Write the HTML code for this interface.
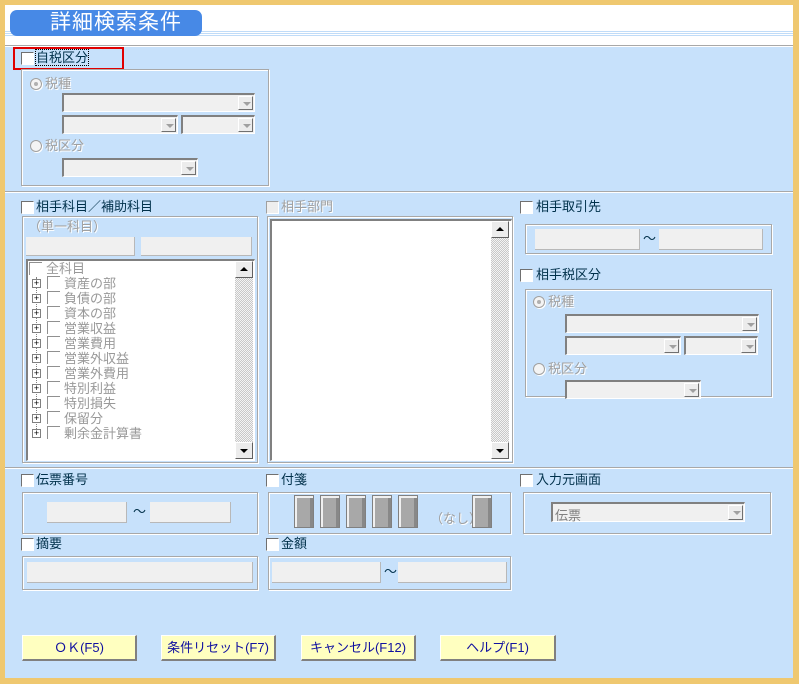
<!DOCTYPE html>
<html><head><meta charset="utf-8"><style>
*{margin:0;padding:0;box-sizing:border-box}
body{width:799px;height:684px;background:#efc870;position:relative;overflow:hidden;font-family:"Liberation Sans","Noto Sans CJK JP",sans-serif;font-size:13px;color:#00304a}
.a{position:absolute}
.main{left:5px;top:5px;width:788px;height:673px;background:#c7e1fb}
.hdr{left:5px;top:5px;width:788px;height:40px;background:#fff}
.hl{left:5px;height:1px;width:788px;background:#c0dcf8}
.sep{left:5px;width:788px;height:2px;border-top:1px solid #a8a8a8;border-bottom:1px solid #fff}
.title{left:10px;top:10px;width:192px;height:26px;background:#4789e6;border-radius:7px;color:#fff;font-size:21px;line-height:26px;padding-left:40px;letter-spacing:1px}
.cb{width:13px;height:13px;background:#fff;border-top:1px solid #707070;border-left:1px solid #707070;border-right:1px solid #fff;border-bottom:1px solid #fff}
.lb{font-size:13px;line-height:15px;color:#00304a;white-space:nowrap}
.dis{color:#a0a0a0;text-shadow:1px 1px 0 #fff}
.grp{border:1px solid #a8a8a8;box-shadow:1px 1px 0 #fff, inset 1px 1px 0 #fff}
.fld{background:#f0f0f0;border-right:1px solid #b8b8b8;border-bottom:1px solid #b8b8b8}
.cmb{background:#f0f0f0;border-top:2px solid #808080;border-left:2px solid #808080;border-right:1px solid #fff;border-bottom:1px solid #fff}
.cmb i{position:absolute;right:1px;top:1px;bottom:1px;width:15px;background:#ececec;border-right:1px solid #707070;border-bottom:1px solid #707070;border-top:1px solid #fff;border-left:1px solid #fff}
.cmb i:after{content:"";position:absolute;left:4px;top:5px;border-left:4px solid transparent;border-right:4px solid transparent;border-top:4px solid #a0a0a0}
.rad{width:12px;height:12px;border-radius:50%;background:#f4f4f4;border:1px solid #a0a0a0;box-shadow:1px 1px 0 #fff}
.rad.on:after{content:"";position:absolute;left:3px;top:3px;width:4px;height:4px;border-radius:50%;background:#b0b0b0}
.lst{background:#fff;border-top:2px solid #808080;border-left:2px solid #808080;border-right:1px solid #fff;border-bottom:1px solid #fff}
.sb{background:repeating-conic-gradient(#c8c8c8 0 25%,#f4f4f4 0 50%) 0 0/2px 2px}
.sbb{width:18px;height:17px;background:#ececec;border-right:1px solid #606060;border-bottom:1px solid #606060;border-top:1px solid #fff;border-left:1px solid #fff}
.up:after,.dn:after{content:"";position:absolute;left:4px;border-left:4px solid transparent;border-right:4px solid transparent}
.up:after{top:5px;border-bottom:4px solid #000}
.dn:after{top:6px;border-top:4px solid #000}
.tr{font-size:13px;color:#999;line-height:15px}
.pl{width:9px;height:9px;border:1px solid #808080;background:#fff;font-size:9px;line-height:7px;text-align:center;color:#000}
.tcb{width:13px;height:13px;border-top:1px solid #909090;border-left:1px solid #909090;background:#fff}
.tag{width:20px;height:33px;background:#a8a8a8;border:1px solid #808080;box-shadow:inset 2px 2px 0 #f0f0f0,inset -3px 0 0 #888}
.btn{height:26px;background:#ffffc0;border-top:1px solid #fff;border-left:1px solid #fff;border-right:2px solid #808080;border-bottom:2px solid #808080;color:#1010a0;text-align:center;line-height:23px;font-size:13px}
</style></head><body>
<div class="a main"></div>
<div class="a hdr"></div>
<div class="a hl" style="top:31px"></div><div class="a hl" style="top:33px"></div><div class="a hl" style="top:35px"></div>
<div class="a title">詳細検索条件</div>
<div class="a sep" style="top:45px"></div>

<div class="a" style="left:13px;top:47px;width:111px;height:23px;border:2px solid #e00000"></div>
<div class="a cb" style="left:21px;top:52px"></div>
<div class="a lb" style="left:36px;top:50px;outline:1px dotted #000">自税区分</div>
<div class="a grp" style="left:21px;top:69px;width:248px;height:117px"></div>
<div class="a rad on" style="left:30px;top:78px"></div><div class="a lb dis" style="left:45px;top:76px">税種</div>
<div class="a cmb" style="left:62px;top:93px;width:193px;height:19px"><i></i></div>
<div class="a cmb" style="left:62px;top:115px;width:116px;height:19px"><i></i></div>
<div class="a cmb" style="left:181px;top:115px;width:74px;height:19px"><i></i></div>
<div class="a rad" style="left:30px;top:140px"></div><div class="a lb dis" style="left:45px;top:138px">税区分</div>
<div class="a cmb" style="left:62px;top:158px;width:136px;height:19px"><i></i></div>

<div class="a sep" style="top:191px"></div>

<div class="a cb" style="left:21px;top:201px"></div><div class="a lb" style="left:36px;top:199px">相手科目／補助科目</div>
<div class="a grp" style="left:22px;top:216px;width:236px;height:247px"></div>
<div class="a lb dis" style="left:28px;top:219px">（単一科目）</div>
<div class="a fld" style="left:26px;top:237px;width:109px;height:19px"></div>
<div class="a fld" style="left:141px;top:237px;width:111px;height:19px"></div>
<div class="a lst" style="left:26px;top:259px;width:229px;height:202px"></div>
<div class="a sb" style="left:235px;top:261px;width:18px;height:198px"></div>
<div class="a sbb up" style="left:235px;top:261px"></div>
<div class="a sbb dn" style="left:235px;top:442px"></div>
<div class="a tcb" style="left:29px;top:262px"></div><div class="a tr" style="left:46px;top:261px">全科目</div>
<div class="a" style="left:36px;top:277px;width:0;height:158px;border-left:1px dotted #808080"></div>
<div class="a" style="left:32px;top:276px">
<div class="a pl" style="left:0;top:3px">+</div><div class="a tcb" style="left:15px;top:0"></div><div class="a tr" style="left:32px;top:0;white-space:nowrap">資産の部</div>
<div class="a pl" style="left:0;top:18px">+</div><div class="a tcb" style="left:15px;top:15px"></div><div class="a tr" style="left:32px;top:15px;white-space:nowrap">負債の部</div>
<div class="a pl" style="left:0;top:33px">+</div><div class="a tcb" style="left:15px;top:30px"></div><div class="a tr" style="left:32px;top:30px;white-space:nowrap">資本の部</div>
<div class="a pl" style="left:0;top:48px">+</div><div class="a tcb" style="left:15px;top:45px"></div><div class="a tr" style="left:32px;top:45px;white-space:nowrap">営業収益</div>
<div class="a pl" style="left:0;top:63px">+</div><div class="a tcb" style="left:15px;top:60px"></div><div class="a tr" style="left:32px;top:60px;white-space:nowrap">営業費用</div>
<div class="a pl" style="left:0;top:78px">+</div><div class="a tcb" style="left:15px;top:75px"></div><div class="a tr" style="left:32px;top:75px;white-space:nowrap">営業外収益</div>
<div class="a pl" style="left:0;top:93px">+</div><div class="a tcb" style="left:15px;top:90px"></div><div class="a tr" style="left:32px;top:90px;white-space:nowrap">営業外費用</div>
<div class="a pl" style="left:0;top:108px">+</div><div class="a tcb" style="left:15px;top:105px"></div><div class="a tr" style="left:32px;top:105px;white-space:nowrap">特別利益</div>
<div class="a pl" style="left:0;top:123px">+</div><div class="a tcb" style="left:15px;top:120px"></div><div class="a tr" style="left:32px;top:120px;white-space:nowrap">特別損失</div>
<div class="a pl" style="left:0;top:138px">+</div><div class="a tcb" style="left:15px;top:135px"></div><div class="a tr" style="left:32px;top:135px;white-space:nowrap">保留分</div>
<div class="a pl" style="left:0;top:153px">+</div><div class="a tcb" style="left:15px;top:150px"></div><div class="a tr" style="left:32px;top:150px;white-space:nowrap">剰余金計算書</div>
</div>

<div class="a cb" style="left:266px;top:201px;border-color:#a0a0a0 #fff #fff #a0a0a0;background:#eee"></div><div class="a lb dis" style="left:281px;top:199px">相手部門</div>
<div class="a grp" style="left:267px;top:216px;width:246px;height:247px"></div>
<div class="a lst" style="left:270px;top:219px;width:242px;height:242px"></div>
<div class="a sb" style="left:491px;top:221px;width:18px;height:238px"></div>
<div class="a sbb up" style="left:491px;top:221px"></div>
<div class="a sbb dn" style="left:491px;top:442px"></div>

<div class="a cb" style="left:520px;top:201px"></div><div class="a lb" style="left:536px;top:199px">相手取引先</div>
<div class="a grp" style="left:525px;top:224px;width:247px;height:30px"></div>
<div class="a fld" style="left:535px;top:229px;width:105px;height:21px"></div>
<div class="a lb" style="left:643px;top:231px">～</div>
<div class="a fld" style="left:659px;top:229px;width:104px;height:21px"></div>

<div class="a cb" style="left:520px;top:269px"></div><div class="a lb" style="left:536px;top:267px">相手税区分</div>
<div class="a grp" style="left:525px;top:289px;width:247px;height:108px"></div>
<div class="a rad on" style="left:533px;top:296px"></div><div class="a lb dis" style="left:548px;top:294px">税種</div>
<div class="a cmb" style="left:565px;top:314px;width:194px;height:19px"><i></i></div>
<div class="a cmb" style="left:565px;top:336px;width:116px;height:19px"><i></i></div>
<div class="a cmb" style="left:684px;top:336px;width:74px;height:19px"><i></i></div>
<div class="a rad" style="left:533px;top:363px"></div><div class="a lb dis" style="left:548px;top:361px">税区分</div>
<div class="a cmb" style="left:565px;top:380px;width:136px;height:19px"><i></i></div>

<div class="a sep" style="top:467px"></div>

<div class="a cb" style="left:21px;top:474px"></div><div class="a lb" style="left:36px;top:472px">伝票番号</div>
<div class="a grp" style="left:22px;top:492px;width:236px;height:42px"></div>
<div class="a fld" style="left:47px;top:502px;width:80px;height:21px"></div>
<div class="a lb" style="left:133px;top:504px">～</div>
<div class="a fld" style="left:150px;top:502px;width:81px;height:21px"></div>

<div class="a cb" style="left:266px;top:474px"></div><div class="a lb" style="left:281px;top:472px">付箋</div>
<div class="a grp" style="left:268px;top:492px;width:243px;height:42px"></div>
<div class="a tag" style="left:294px;top:495px"></div>
<div class="a tag" style="left:320px;top:495px"></div>
<div class="a tag" style="left:346px;top:495px"></div>
<div class="a tag" style="left:372px;top:495px"></div>
<div class="a tag" style="left:398px;top:495px"></div>
<div class="a lb dis" style="left:430px;top:511px">（なし）</div>
<div class="a tag" style="left:472px;top:495px"></div>

<div class="a cb" style="left:520px;top:474px"></div><div class="a lb" style="left:536px;top:472px">入力元画面</div>
<div class="a grp" style="left:523px;top:492px;width:248px;height:42px"></div>
<div class="a cmb" style="left:551px;top:502px;width:194px;height:20px"><i></i><span class="a" style="left:2px;top:1px;color:#808080">伝票</span></div>

<div class="a cb" style="left:21px;top:538px"></div><div class="a lb" style="left:36px;top:536px">摘要</div>
<div class="a grp" style="left:22px;top:556px;width:236px;height:34px"></div>
<div class="a fld" style="left:27px;top:562px;width:226px;height:21px"></div>

<div class="a cb" style="left:266px;top:538px"></div><div class="a lb" style="left:281px;top:536px">金額</div>
<div class="a grp" style="left:268px;top:556px;width:243px;height:34px"></div>
<div class="a fld" style="left:272px;top:562px;width:109px;height:21px"></div>
<div class="a lb" style="left:384px;top:564px">～</div>
<div class="a fld" style="left:398px;top:562px;width:109px;height:21px"></div>

<div class="a btn" style="left:22px;top:635px;width:115px">ＯＫ(F5)</div>
<div class="a btn" style="left:161px;top:635px;width:115px">条件リセット(F7)</div>
<div class="a btn" style="left:301px;top:635px;width:115px">キャンセル(F12)</div>
<div class="a btn" style="left:440px;top:635px;width:116px">ヘルプ(F1)</div>
</body></html>
